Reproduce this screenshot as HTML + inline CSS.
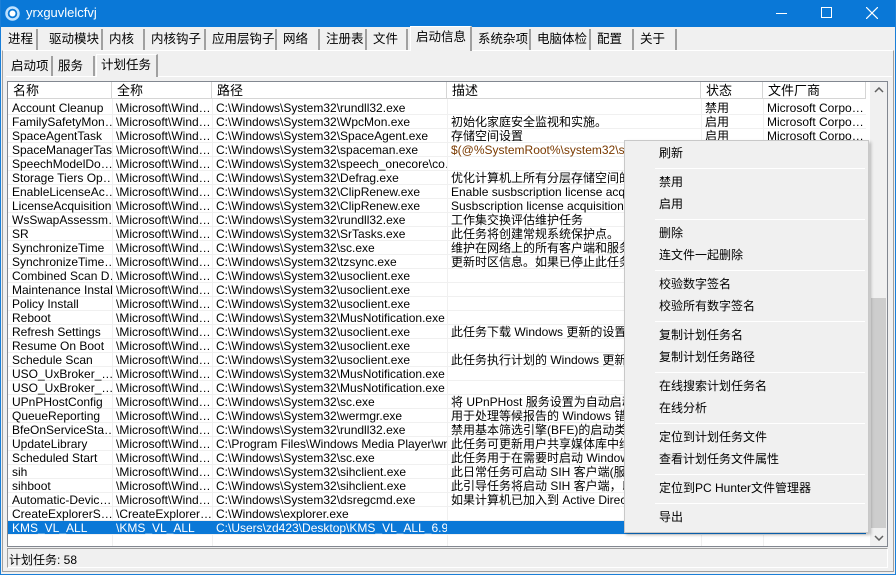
<!DOCTYPE html>
<html><head><meta charset="utf-8"><style>
*{box-sizing:border-box;margin:0;padding:0}
body{width:896px;height:575px;overflow:hidden;background:#f0f0f0;font:12px "Liberation Sans","Noto Sans CJK SC",sans-serif;color:#000;position:relative}
.a{position:absolute;white-space:nowrap}
#title{left:0;top:0;width:896px;height:27px;background:#0a78d7;color:#fff;font-size:13px}
#frame{left:0;top:0;width:896px;height:575px;border:1px solid #1a7fd8;border-top:none;pointer-events:none}
.tab{position:absolute;top:29px;height:21px;border-right:2px solid #a0a0a0;padding:2px 0 0 5px;font-size:12.5px;white-space:nowrap;overflow:hidden;line-height:17px}
.st{position:absolute;top:56px;height:20px;border-right:2px solid #a0a0a0;padding:2px 0 0 4px;font-size:12.5px;white-space:nowrap;overflow:hidden;line-height:17px}
#list{left:7px;top:81px;width:881px;height:466px;background:#fff;border:1px solid #828790;overflow:hidden}
.hd{position:absolute;top:0;height:17px;background:#fff;border-right:1px solid #d5d5d5;border-bottom:1px solid #d5d5d5;padding:1px 0 0 5px;font-size:13px;line-height:15px;white-space:nowrap;overflow:hidden}
.row{position:absolute;left:0;width:858px;height:14px;border-bottom:1px solid #f0f0f0;font-size:12px;line-height:14px}
.row span{position:absolute;top:0;overflow:hidden;white-space:nowrap;padding-left:4px;height:14px}
.vl{position:absolute;top:17px;width:1px;height:460px;background:#f0f0f0}
.sel{background:#0a78d7;color:#fff}
#menu{left:624px;top:140px;width:245px;height:393px;background:#f0f0f0;border:1px solid #c8c8c8;box-shadow:2px 2px 3px rgba(0,0,0,.25)}
.mi{position:absolute;left:34px;font-size:12px;line-height:14px}
.sep{position:absolute;left:30px;width:210px;height:1px;background:#d7d7d7;border-bottom:1px solid #fff}
</style></head><body>
<div id="title" class="a">
<svg class="a" style="left:5px;top:6px" width="15" height="15"><circle cx="7.5" cy="7.5" r="6" fill="none" stroke="#bfe2ff" stroke-width="2.5"/><circle cx="7.5" cy="7.5" r="3" fill="#fff"/></svg>
<span class="a" style="left:26px;top:5px">yrxguvlelcfvj</span>
<div class="a" style="left:776px;top:13px;width:11px;height:1px;background:#fff"></div>
<div class="a" style="left:821px;top:7px;width:11px;height:11px;border:1px solid #fff"></div>
<svg class="a" style="left:866px;top:7px" width="12" height="12"><path d="M0 0L12 12M12 0L0 12" stroke="#fff" stroke-width="1.2"/></svg>
</div>
<div class="a" style="left:2px;top:50px;width:892px;height:522px;border:1px solid #a0a0a0;border-top-color:#fff"></div>
<div class="tab" style="left:3px;width:35px">进程</div>
<div class="tab" style="left:44px;width:59px">驱动模块</div>
<div class="tab" style="left:104px;width:41px">内核</div>
<div class="tab" style="left:146px;width:60px">内核钩子</div>
<div class="tab" style="left:207px;width:70px">应用层钩子</div>
<div class="tab" style="left:278px;width:42px">网络</div>
<div class="tab" style="left:321px;width:46px">注册表</div>
<div class="tab" style="left:368px;width:40px">文件</div>
<div class="tab" style="left:410px;top:26px;width:62px;height:25px;background:#f0f0f0;border-left:1px solid #fff;border-top:1px solid #fff">启动信息</div>
<div class="tab" style="left:473px;width:58px">系统杂项</div>
<div class="tab" style="left:532px;width:59px">电脑体检</div>
<div class="tab" style="left:592px;width:42px">配置</div>
<div class="tab" style="left:635px;width:42px">关于</div>
<div class="a" style="left:6px;top:76px;width:886px;height:1px;background:#fff"></div>
<div class="st" style="left:7px;width:46px">启动项</div>
<div class="st" style="left:54px;width:41px">服务</div>
<div class="st" style="left:96px;top:54px;height:23px;width:62px;border-left:1px solid #fff;border-top:1px solid #fff;background:#f0f0f0">计划任务</div>
<div id="list" class="a">
<div class="hd" style="left:0;width:104px">名称</div>
<div class="hd" style="left:104px;width:100px">全称</div>
<div class="hd" style="left:204px;width:235px">路径</div>
<div class="hd" style="left:439px;width:254px">描述</div>
<div class="hd" style="left:693px;width:62px">状态</div>
<div class="hd" style="left:755px;width:103px">文件厂商</div>
<div class="vl" style="left:104px"></div><div class="vl" style="left:204px"></div><div class="vl" style="left:439px"></div><div class="vl" style="left:693px"></div><div class="vl" style="left:755px"></div>
<div id="rows"></div>
<div class="a" style="left:862px;top:0;width:17px;height:464px;background:#f0f0f0"></div>
<div class="a" style="left:863px;top:216px;width:15px;height:230px;background:#cdcdcd"></div>
<svg class="a" style="left:866px;top:5px" width="10" height="6"><path d="M1 5L5 1L9 5" stroke="#606060" fill="none" stroke-width="1.5"/></svg>
<svg class="a" style="left:866px;top:453px" width="10" height="6"><path d="M1 1L5 5L9 1" stroke="#606060" fill="none" stroke-width="1.5"/></svg>
</div>
<div class="a" style="left:7px;top:548px;width:881px;height:20px;border:1px solid #a0a0a0;border-right-color:#fff;border-bottom-color:#fff;padding:2px 0 0 1px">计划任务: 58</div>
<div id="menu" class="a">
<div class="mi" style="top:5px">刷新</div><div class="sep" style="top:27px"></div>
<div class="mi" style="top:34px">禁用</div><div class="mi" style="top:56px">启用</div><div class="sep" style="top:78px"></div>
<div class="mi" style="top:85px">删除</div><div class="mi" style="top:107px">连文件一起删除</div><div class="sep" style="top:129px"></div>
<div class="mi" style="top:136px">校验数字签名</div><div class="mi" style="top:158px">校验所有数字签名</div><div class="sep" style="top:180px"></div>
<div class="mi" style="top:187px">复制计划任务名</div><div class="mi" style="top:209px">复制计划任务路径</div><div class="sep" style="top:231px"></div>
<div class="mi" style="top:238px">在线搜索计划任务名</div><div class="mi" style="top:260px">在线分析</div><div class="sep" style="top:282px"></div>
<div class="mi" style="top:289px">定位到计划任务文件</div><div class="mi" style="top:311px">查看计划任务文件属性</div><div class="sep" style="top:333px"></div>
<div class="mi" style="top:340px">定位到PC Hunter文件管理器</div><div class="sep" style="top:362px"></div>
<div class="mi" style="top:369px">导出</div>
</div>
<div id="frame" class="a"></div>
<script>
var W="\\Microsoft\\Wind…",S="C:\\Windows\\System32\\";
var d=[
["Account Cleanup",W,S+"rundll32.exe","","禁用","Microsoft Corpo…"],
["FamilySafetyMon…",W,S+"WpcMon.exe","初始化家庭安全监视和实施。","启用","Microsoft Corpo…"],
["SpaceAgentTask",W,S+"SpaceAgent.exe","存储空间设置","启用","Microsoft Corpo…"],
["SpaceManagerTask",W,S+"spaceman.exe","$(@%SystemRoot%\\system32\\spaceman.exe","启用","Microsoft Corpo…"],
["SpeechModelDo…",W,S+"speech_onecore\\co…","","",""],
["Storage Tiers Op…",W,S+"Defrag.exe","优化计算机上所有分层存储空间的存储层","",""],
["EnableLicenseAc…",W,S+"ClipRenew.exe","Enable susbscription license acquisition","",""],
["LicenseAcquisition",W,S+"ClipRenew.exe","Susbscription license acquisition","",""],
["WsSwapAssessm…",W,S+"rundll32.exe","工作集交换评估维护任务","",""],
["SR",W,S+"SrTasks.exe","此任务将创建常规系统保护点。","",""],
["SynchronizeTime",W,S+"sc.exe","维护在网络上的所有客户端和服务器","",""],
["SynchronizeTime…",W,S+"tzsync.exe","更新时区信息。如果已停止此任务","",""],
["Combined Scan D…",W,S+"usoclient.exe","","",""],
["Maintenance Install",W,S+"usoclient.exe","","",""],
["Policy Install",W,S+"usoclient.exe","","",""],
["Reboot",W,S+"MusNotification.exe","","",""],
["Refresh Settings",W,S+"usoclient.exe","此任务下载 Windows 更新的设置。","",""],
["Resume On Boot",W,S+"usoclient.exe","","",""],
["Schedule Scan",W,S+"usoclient.exe","此任务执行计划的 Windows 更新扫描","",""],
["USO_UxBroker_…",W,S+"MusNotification.exe","","",""],
["USO_UxBroker_…",W,S+"MusNotification.exe","","",""],
["UPnPHostConfig",W,S+"sc.exe","将 UPnPHost 服务设置为自动启动","",""],
["QueueReporting",W,S+"wermgr.exe","用于处理等候报告的 Windows 错误","",""],
["BfeOnServiceSta…",W,S+"rundll32.exe","禁用基本筛选引擎(BFE)的启动类型","",""],
["UpdateLibrary",W,"C:\\Program Files\\Windows Media Player\\wm…","此任务可更新用户共享媒体库中维","",""],
["Scheduled Start",W,S+"sc.exe","此任务用于在需要时启动 Windows","",""],
["sih",W,S+"sihclient.exe","此日常任务可启动 SIH 客户端(服务","",""],
["sihboot",W,S+"sihclient.exe","此引导任务将启动 SIH 客户端，以","",""],
["Automatic-Devic…",W,S+"dsregcmd.exe","如果计算机已加入到 Active Directory","",""],
["CreateExplorerS…","\\CreateExplorer…","C:\\Windows\\explorer.exe","","",""],
["KMS_VL_ALL","\\KMS_VL_ALL","C:\\Users\\zd423\\Desktop\\KMS_VL_ALL_6.9_…","","",""]];
var L=[0,104,204,439,693,755],Wd=[104,100,235,254,62,103],h="";
d.forEach(function(r,i){h+='<div class="row'+(i==30?' sel':'')+'" style="top:'+(19+i*14)+'px">';
r.forEach(function(c,j){h+='<span style="left:'+L[j]+'px;width:'+Wd[j]+'px'+(i==3&&j==3?';color:#7a3a00':'')+'">'+c.replace(/</g,'&lt;')+'</span>'});h+='</div>'});
document.getElementById('rows').innerHTML=h;
</script>
</body></html>
